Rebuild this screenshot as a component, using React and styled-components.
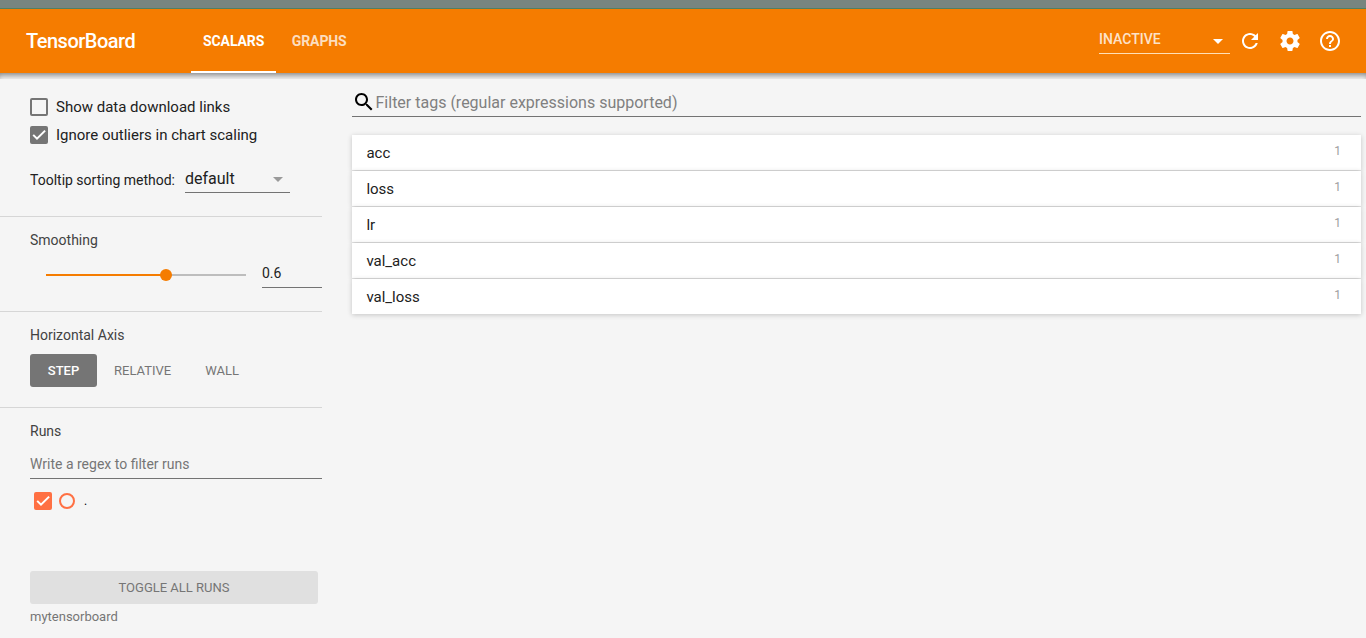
import {useState} from "react";
import styled, {createGlobalStyle} from "styled-components";

const tabs = ['SCALARS', 'GRAPHS'];
const axes = ['STEP', 'RELATIVE', 'WALL'];
const tags = [
    {name: 'acc', count: 1},
    {name: 'loss', count: 1},
    {name: 'lr', count: 1},
    {name: 'val_acc', count: 1},
    {name: 'val_loss', count: 1},
]

const icons = {
    refresh: 'M17.65 6.35C16.2 4.9 14.21 4 12 4c-4.42 0-7.99 3.58-7.99 8s3.57 8 7.99 8c3.73 0 6.84-2.55 7.73-6h-2.08c-.82 2.33-3.04 4-5.65 4-3.31 0-6-2.69-6-6s2.69-6 6-6c1.66 0 3.14.69 4.22 1.78L13 11h7V4l-2.35 2.35z',
    settings: 'M19.43 12.98c.04-.32.07-.64.07-.98s-.03-.66-.07-.98l2.11-1.65c.19-.15.24-.42.12-.64l-2-3.46c-.12-.22-.39-.3-.61-.22l-2.49 1c-.52-.4-1.08-.73-1.69-.98l-.38-2.65C14.46 2.18 14.25 2 14 2h-4c-.25 0-.46.18-.49.42l-.38 2.65c-.61.25-1.17.59-1.69.98l-2.49-1c-.23-.09-.49 0-.61.22l-2 3.46c-.13.22-.07.49.12.64l2.11 1.65c-.04.32-.07.65-.07.98s.03.66.07.98l-2.11 1.65c-.19.15-.24.42-.12.64l2 3.46c.12.22.39.3.61.22l2.49-1c.52.4 1.08.73 1.69.98l.38 2.65c.03.24.24.42.49.42h4c.25 0 .46-.18.49-.42l.38-2.65c.61-.25 1.17-.59 1.69-.98l2.49 1c.23.09.49 0 .61-.22l2-3.46c.12-.22.07-.49-.12-.64l-2.11-1.65zM12 15.5c-1.93 0-3.5-1.57-3.5-3.5s1.57-3.5 3.5-3.5 3.5 1.57 3.5 3.5-1.57 3.5-3.5 3.5z',
    help: 'M11 18h2v-2h-2v2zm1-16C6.48 2 2 6.48 2 12s4.48 10 10 10 10-4.48 10-10S17.52 2 12 2zm0 18c-4.41 0-8-3.59-8-8s3.59-8 8-8 8 3.59 8 8-3.59 8-8 8zm0-14c-2.21 0-4 1.79-4 4h2c0-1.1.9-2 2-2s2 .9 2 2c0 2-3 1.75-3 5h2c0-2.25 3-2.5 3-5 0-2.21-1.79-4-4-4z',
    search: 'M15.5 14h-.79l-.28-.27C15.41 12.59 16 11.11 16 9.5 16 5.91 13.09 3 9.5 3S3 5.91 3 9.5 5.91 16 9.5 16c1.61 0 3.09-.59 4.23-1.57l.27.28v.79l5 4.99L20.49 19l-4.99-5zm-6 0C7.01 14 5 11.99 5 9.5S7.01 5 9.5 5 14 7.01 14 9.5 11.99 14 9.5 14z',
    dropDown: 'M7 10l5 5 5-5z',
}

const GlobalStyle = createGlobalStyle`
  * {
    box-sizing: border-box;
  }

  body {
    margin: 0;
    overflow: hidden;
    background: #f5f5f5;
    font-family: Roboto, "Liberation Sans", sans-serif;
  }

  button, input {
    font-family: inherit;
  }
`;

const Page = styled.div`
  display: flex;
  flex-direction: column;
  height: 100vh;
`;

const TopStrip = styled.div`
  flex: none;
  height: 9px;
  background: #78857f;
  border-bottom: 1px solid #53805f;
`;

const Toolbar = styled.header`
  z-index: 1;
  flex: none;
  display: flex;
  align-items: center;
  height: 64px;
  padding: 0 24px 0 26px;
  background: #f57c00;
  color: #fff;
`;

const ToolbarShadow = styled.div`
  flex: none;
  height: 6px;
  margin-bottom: -6px;
  box-shadow: inset 0 5px 6px -3px rgba(0, 0, 0, 0.5);
`;

const Title = styled.div`
  width: 165px;
  font-size: 20px;
  font-weight: 500;
  letter-spacing: -0.5px;
`;

const Tabs = styled.nav`
  display: flex;
  flex: 1;
  align-self: stretch;
  gap: 4px;
`;

const Tab = styled.button`
  padding: 2px 11.6px 0 12px;
  border: 0;
  border-bottom: 2px solid ${props => props.$active ? '#fff' : 'transparent'};
  background: none;
  color: ${props => props.$active ? '#fff' : 'rgba(255, 255, 255, 0.75)'};
  font-size: 14px;
  font-weight: 700;
  letter-spacing: -0.1px;
`;

const ReloadStatus = styled.div`
  display: flex;
  align-items: center;
  justify-content: space-between;
  width: 131px;
  height: 26px;
  margin: 0 8px 1px 0;
  border-bottom: 1px solid #ffe0b8;
  color: rgba(255, 255, 255, 0.8);
  font-size: 14px;
  font-weight: 500;
  line-height: 22px;

  span {
    padding-bottom: 2px;
  }

  svg {
    color: #fff;
    margin-top: 1px;
  }
`;

const ToolbarIcons = styled.div`
  display: flex;
  gap: 16px;
`;

const Svg = styled.svg`
  display: block;
  flex: none;
  fill: currentColor;
`;

const Content = styled.div`
  display: flex;
  flex: 1;
  min-height: 0;
`;

const Sidebar = styled.aside`
  display: flex;
  flex-direction: column;
  flex: none;
  width: 322px;
`;

const Section = styled.section`
  flex: none;
  height: ${props => props.$height}px;
  padding: ${props => props.$top}px 0 0 30px;
  border-bottom: 1px solid #d6d6d6;
`;

const RunsSection = styled.section`
  display: flex;
  flex-direction: column;
  flex: 1;
  padding: 14px 0 12px 30px;
`;

const Heading = styled.h3`
  margin: 0;
  color: #424242;
  font-size: 14px;
  font-weight: 400;
  line-height: 18px;
`;

const CheckRow = styled.label`
  display: flex;
  align-items: center;
  gap: 8px;
  height: 28px;
  color: #212121;
  font-size: 15px;
`;

const Box = styled.span`
  display: flex;
  align-items: center;
  justify-content: center;
  width: 18px;
  height: 18px;
  border: 2px solid ${props => props.$color};
  border-radius: 2px;
  background: ${props => props.$checked ? props.$color : 'transparent'};
  color: #fff;
`;

const SortRow = styled.div`
  display: flex;
  align-items: flex-end;
  gap: 10px;
  margin-top: 16px;
  color: #212121;
  font-size: 14px;
  line-height: 26px;
`;

const Select = styled.div`
  display: flex;
  align-items: center;
  justify-content: space-between;
  width: 105px;
  height: 28px;
  border-bottom: 1px solid #737373;
  font-size: 16px;

  svg {
    color: #9a9a9a;
  }
`;

const SmoothingRow = styled.div`
  display: flex;
  align-items: center;
  gap: 16px;
  margin-top: 11px;
  padding-left: 16px;
`;

const Slider = styled.div`
  display: flex;
  align-items: center;
  width: 200px;
  padding-top: 2px;
`;

const SliderBar = styled.div`
  height: 2px;
  background: ${props => props.$filled ? '#f57c00' : '#bdbdbd'};
`;

const Knob = styled.div`
  flex: none;
  width: 12px;
  height: 12px;
  margin: 0 -6px;
  border-radius: 50%;
  background: #f57c00;
  z-index: 1;
`;

const NumberInput = styled.input`
  width: 60px;
  height: 28px;
  padding: 0 0 1px;
  border: 0;
  border-bottom: 1px solid #737373;
  background: none;
  color: #212121;
  font-size: 14px;
  outline: none;
`;

const AxisButtons = styled.div`
  display: flex;
  margin-top: 10px;
`;

const AxisButton = styled.button`
  height: 33px;
  padding: 0 17px;
  border: 0;
  border-radius: 3px;
  background: ${props => props.$active ? '#757575' : 'transparent'};
  color: ${props => props.$active ? '#fff' : '#757575'};
  font-size: 13px;
  font-weight: ${props => props.$active ? 500 : 400};

  &:first-child {
    width: 67px;
  }
`;

const RunsInput = styled.input`
  flex: none;
  height: 29px;
  margin-top: 10px;
  padding: 0;
  border: 0;
  border-bottom: 1px solid #737373;
  background: none;
  font-size: 14px;
  outline: none;

  &::placeholder {
    color: #757575;
  }
`;

const RunRow = styled.div`
  display: flex;
  align-items: center;
  flex: 1;
  align-self: flex-start;
  max-height: 18px;
  margin-top: 13px;
  padding-left: 4px;
  font-size: 12px;
`;

const RunDot = styled.span`
  width: 16px;
  height: 16px;
  margin: 0 9px 0 7px;
  border: 2px solid #ff7043;
  border-radius: 50%;
`;

const ToggleButton = styled.button`
  flex: none;
  height: 33px;
  margin: auto 4px 0 0;
  border: 0;
  border-radius: 3px;
  background: #e0e0e0;
  color: #757575;
  font-size: 13px;
`;

const LogDir = styled.div`
  margin-top: 4px;
  color: #757575;
  font-size: 13px;
  line-height: 18px;
`;

const Main = styled.main`
  flex: 1;
  padding: 15px 5px 0 30px;
`;

const TagFilter = styled.div`
  display: flex;
  align-items: center;
  height: 29px;
  border-bottom: 1px solid #737373;
`;

const TagInput = styled.input`
  flex: 1;
  margin-left: -0.5px;
  padding: 0;
  border: 0;
  background: none;
  font-size: 16px;
  outline: none;

  &::placeholder {
    color: #808080;
  }
`;

const TagList = styled.div`
  display: flex;
  flex-direction: column;
  gap: 1px;
  margin-top: 18px;
`;

const TagRow = styled.button`
  display: flex;
  justify-content: space-between;
  height: 35px;
  padding: 9px 20px 0 14.4px;
  border: 0;
  background: #fff;
  box-shadow: 0 1px 5px rgba(0, 0, 0, 0.2);
  color: #212121;
  font-size: 15px;
  line-height: 18px;
`;

const TagCount = styled.span`
  color: #9e9e9e;
  font-size: 12px;
  line-height: 14px;
`;

const Icon = ({name, size = 24}) => (
    <Svg width={size} height={size} viewBox="0 0 24 24">
        <path d={icons[name]}/>
    </Svg>
);

const Checkbox = ({checked, color = '#757575'}) => (
    <Box $checked={checked} $color={color}>
        {checked && (
            <Svg width="14" height="14" viewBox="0 0 14 14">
                <path d="M1.2 6.9L5 10.7L13.1 2.6" fill="none" stroke="currentColor" strokeWidth="2"/>
            </Svg>
        )}
    </Box>
);

const Header = () => {
    const [current, setCurrent] = useState('SCALARS');

    return (
        <Toolbar>
            <Title>TensorBoard</Title>
            <Tabs>
                {tabs.map(tab => (
                    <Tab key={tab} $active={tab === current} onClick={() => setCurrent(tab)}>{tab}</Tab>
                ))}
            </Tabs>
            <ReloadStatus>
                <span>INACTIVE</span>
                <Icon name="dropDown"/>
            </ReloadStatus>
            <ToolbarIcons>
                <Icon name="refresh"/>
                <Icon name="settings"/>
                <Icon name="help"/>
            </ToolbarIcons>
        </Toolbar>
    );
}

const Settings = () => {
    const [axis, setAxis] = useState('STEP');
    const [smoothing, setSmoothing] = useState('0.6');
    const filled = Math.min(Math.max(Number(smoothing) || 0, 0), 1) * 100;

    return (
        <Sidebar>
            <Section $height={144} $top={20}>
                <CheckRow><Checkbox/>Show data download links</CheckRow>
                <CheckRow><Checkbox checked/>Ignore outliers in chart scaling</CheckRow>
                <SortRow>
                    Tooltip sorting method:
                    <Select>
                        default
                        <Icon name="dropDown"/>
                    </Select>
                </SortRow>
            </Section>
            <Section $height={95} $top={14}>
                <Heading>Smoothing</Heading>
                <SmoothingRow>
                    <Slider>
                        <SliderBar $filled style={{width: `${filled}%`}}/>
                        <Knob/>
                        <SliderBar style={{width: `${100 - filled}%`}}/>
                    </Slider>
                    <NumberInput value={smoothing} onChange={e => setSmoothing(e.target.value)}/>
                </SmoothingRow>
            </Section>
            <Section $height={96} $top={14}>
                <Heading>Horizontal Axis</Heading>
                <AxisButtons>
                    {axes.map(name => (
                        <AxisButton key={name} $active={name === axis} onClick={() => setAxis(name)}>{name}</AxisButton>
                    ))}
                </AxisButtons>
            </Section>
            <RunsSection>
                <Heading>Runs</Heading>
                <RunsInput placeholder="Write a regex to filter runs"/>
                <RunRow>
                    <Checkbox checked color="#ff7043"/>
                    <RunDot/>
                    .
                </RunRow>
                <ToggleButton>TOGGLE ALL RUNS</ToggleButton>
                <LogDir>mytensorboard</LogDir>
            </RunsSection>
        </Sidebar>
    );
}

const App = () => (
    <Page>
        <GlobalStyle/>
        <TopStrip/>
        <Header/>
        <ToolbarShadow/>
        <Content>
            <Settings/>
            <Main>
                <TagFilter>
                    <Icon name="search"/>
                    <TagInput placeholder="Filter tags (regular expressions supported)"/>
                </TagFilter>
                <TagList>
                    {tags.map(tag => (
                        <TagRow key={tag.name}>
                            {tag.name}
                            <TagCount>{tag.count}</TagCount>
                        </TagRow>
                    ))}
                </TagList>
            </Main>
        </Content>
    </Page>
);

export default App;
